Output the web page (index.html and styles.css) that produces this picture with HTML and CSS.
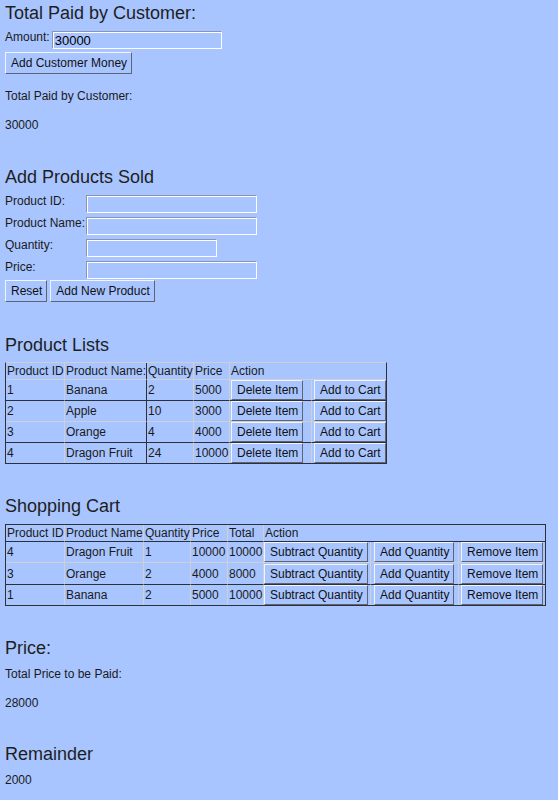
FILE: index.html
```html
<!DOCTYPE html>
<html>
<head>
<meta charset="utf-8">
<title>Shop</title>
<link rel="stylesheet" href="styles.css">
</head>
<body>
<main class="page">
  <section class="block first">
    <h3 class="heading">Total Paid by Customer:</h3>
    <div class="amount-row">
      <label class="lbl">Amount:</label>
      <input class="field amount" type="text" value="30000">
    </div>
    <div class="actions tight"><button class="btn">Add Customer Money</button></div>
    <p class="text gap15">Total Paid by Customer:</p>
    <p class="text gap15">30000</p>
  </section>

  <section class="block s2">
    <h3 class="heading">Add Products Sold</h3>
    <div class="form">
      <div class="form-row"><label class="flabel">Product ID:</label><input class="field wide" type="text"></div>
      <div class="form-row"><label class="flabel">Product Name:</label><input class="field wide" type="text"></div>
      <div class="form-row"><label class="flabel">Quantity:</label><input class="field narrow" type="text"></div>
      <div class="form-row"><label class="flabel">Price:</label><input class="field wide" type="text"></div>
    </div>
    <div class="actions after-form"><button class="btn">Reset</button><button class="btn">Add New Product</button></div>
  </section>

  <section class="block s3">
    <h3 class="heading">Product Lists</h3>
    <table class="grid products">
      <colgroup><col class="w59"><col class="w82"><col class="w47"><col class="w36"><col class="w82"><col class="w74"></colgroup>
      <tr><th>Product ID</th><th class="dkr">Product Name:</th><th>Quantity</th><th>Price</th><th colspan="2">Action</th></tr>
      <tr class="dk"><td>1</td><td class="dkr">Banana</td><td>2</td><td>5000</td><td><button class="btn sm">Delete Item</button></td><td class="p2"><button class="btn sm">Add to Cart</button></td></tr>
      <tr><td>2</td><td class="dkr">Apple</td><td>10</td><td>3000</td><td><button class="btn sm">Delete Item</button></td><td class="p2"><button class="btn sm">Add to Cart</button></td></tr>
      <tr class="dk"><td>3</td><td class="dkr">Orange</td><td>4</td><td>4000</td><td><button class="btn sm">Delete Item</button></td><td class="p2"><button class="btn sm">Add to Cart</button></td></tr>
      <tr><td>4</td><td class="dkr">Dragon Fruit</td><td>24</td><td>10000</td><td><button class="btn sm">Delete Item</button></td><td class="p2"><button class="btn sm">Add to Cart</button></td></tr>
    </table>
  </section>

  <section class="block s4">
    <h3 class="heading">Shopping Cart</h3>
    <table class="grid cart">
      <colgroup><col class="w59"><col class="w79"><col class="w47"><col class="w37"><col class="w36"><col class="w107"><col class="w88"><col class="w86"></colgroup>
      <tr class="dk"><th>Product ID</th><th>Product Name</th><th>Quantity</th><th>Price</th><th>Total</th><th colspan="3">Action</th></tr>
      <tr><td>4</td><td>Dragon Fruit</td><td>1</td><td>10000</td><td>10000</td><td class="p0"><button class="btn sm">Subtract Quantity</button></td><td class="p3"><button class="btn sm">Add Quantity</button></td><td class="p2"><button class="btn sm">Remove Item</button></td></tr>
      <tr class="dk tall"><td>3</td><td>Orange</td><td>2</td><td>4000</td><td>8000</td><td class="p0"><button class="btn sm">Subtract Quantity</button></td><td class="p3"><button class="btn sm">Add Quantity</button></td><td class="p2"><button class="btn sm">Remove Item</button></td></tr>
      <tr><td>1</td><td>Banana</td><td>2</td><td>5000</td><td>10000</td><td class="p0"><button class="btn sm">Subtract Quantity</button></td><td class="p3"><button class="btn sm">Add Quantity</button></td><td class="p2"><button class="btn sm">Remove Item</button></td></tr>
    </table>
  </section>

  <section class="block s5">
    <h3 class="heading">Price:</h3>
    <p class="text gap9">Total Price to be Paid:</p>
    <p class="text gap15">28000</p>
  </section>

  <section class="block s6">
    <h3 class="heading">Remainder</h3>
    <p class="text gap10">2000</p>
  </section>
</main>
</body>
</html>
```

FILE: styles.css
```css
html, body {
  margin: 0;
  padding: 0;
  background: #a9c5ff;
}
body {
  font-family: "Liberation Sans", Arial, Helvetica, sans-serif;
  font-size: 12px;
  line-height: 14px;
  color: #1a1a1a;
  min-height: 800px;
}
.page {
  padding: 0 5px;
}
.block { display: block; }
.heading {
  margin: 0;
  font-size: 18px;
  line-height: 20px;
  font-weight: normal;
  color: #1e1e1e;
}
.first .heading { margin-top: 3px; }
.s2 .heading { margin-top: 35px; }
.s3 .heading { margin-top: 33px; }
.s4 .heading { margin-top: 32px; }
.s5 .heading { margin-top: 32px; }
.s6 .heading { margin-top: 34px; }

.text { margin: 0; line-height: 14px; }
.gap15 { margin-top: 15px; }
.gap9 { margin-top: 9px; }
.gap10 { margin-top: 9px; }

.amount-row {
  display: flex;
  align-items: flex-start;
  margin-top: 7px;
}
.lbl { line-height: 14px; }
.field {
  box-sizing: border-box;
  height: 17px;
  margin: 2px 0 0 0;
  padding: 0 1px;
  background: transparent;
  border: 1px solid #ffffff;
  box-shadow: -1px -1px 0 #8794b3;
  font-family: "Liberation Sans", Arial, sans-serif;
  font-size: 13px;
  color: #000;
  outline: none;
}
.amount { width: 169px; margin-left: 3px; }
.wide { width: 170px; }
.narrow { width: 130px; }

.actions { display: flex; gap: 3px; }
.tight { margin-top: 3px; }
.after-form { margin-top: 1px; }

.btn {
  box-sizing: border-box;
  height: 22px;
  padding: 0 4px 0 5px;
  background: transparent;
  border: 1px solid;
  border-color: #f2f4fa #5f6470 #5f6470 #f2f4fa;
  font-family: "Liberation Sans", Arial, sans-serif;
  font-size: 12px;
  color: #111;
  line-height: 18px;
}
.btn.sm { height: 20px; display: block; }

.form { margin-top: 7px; display: flex; flex-direction: column; gap: 3px; }
.form-row { display: flex; align-items: flex-start; }
.flabel { width: 82px; line-height: 14px; }

.grid {
  border-spacing: 0;
  border: 1px solid #2e3038;
  table-layout: fixed;
  margin-top: 7px;
}
.products { width: 382px; border-top-color: #cfcfcf; }
.cart { width: 541px; margin-top: 8px; }
.grid th, .grid td {
  padding: 0 1px;
  text-align: left;
  font-weight: normal;
  border-right: 1px solid #cfd0d4;
  border-bottom: 1px solid #cfd0d4;
  white-space: nowrap;
  overflow: hidden;
  vertical-align: middle;
}
.grid th { height: 16px; line-height: 16px; }
.grid td { height: 20px; line-height: 16px; }
.grid tr.tall td { height: 21px; }
.grid tr > :last-child { border-right: 0; }
.grid tr:last-child > * { border-bottom: 0; }
.grid tr.dk > * { border-bottom-color: #2e3038; }
.grid .dkr { border-right-color: #2e3038; }
.grid td.p0 { padding-left: 0; }
.grid td.p2 { padding-left: 2px; }
.grid td.p3 { padding-left: 3px; }

.w59 { width: 59px; }
.w82 { width: 82px; }
.w47 { width: 47px; }
.w36 { width: 36px; }
.w37 { width: 37px; }
.w74 { width: 74px; }
.w79 { width: 79px; }
.w107 { width: 107px; }
.w88 { width: 88px; }
.w86 { width: 86px; }
```
